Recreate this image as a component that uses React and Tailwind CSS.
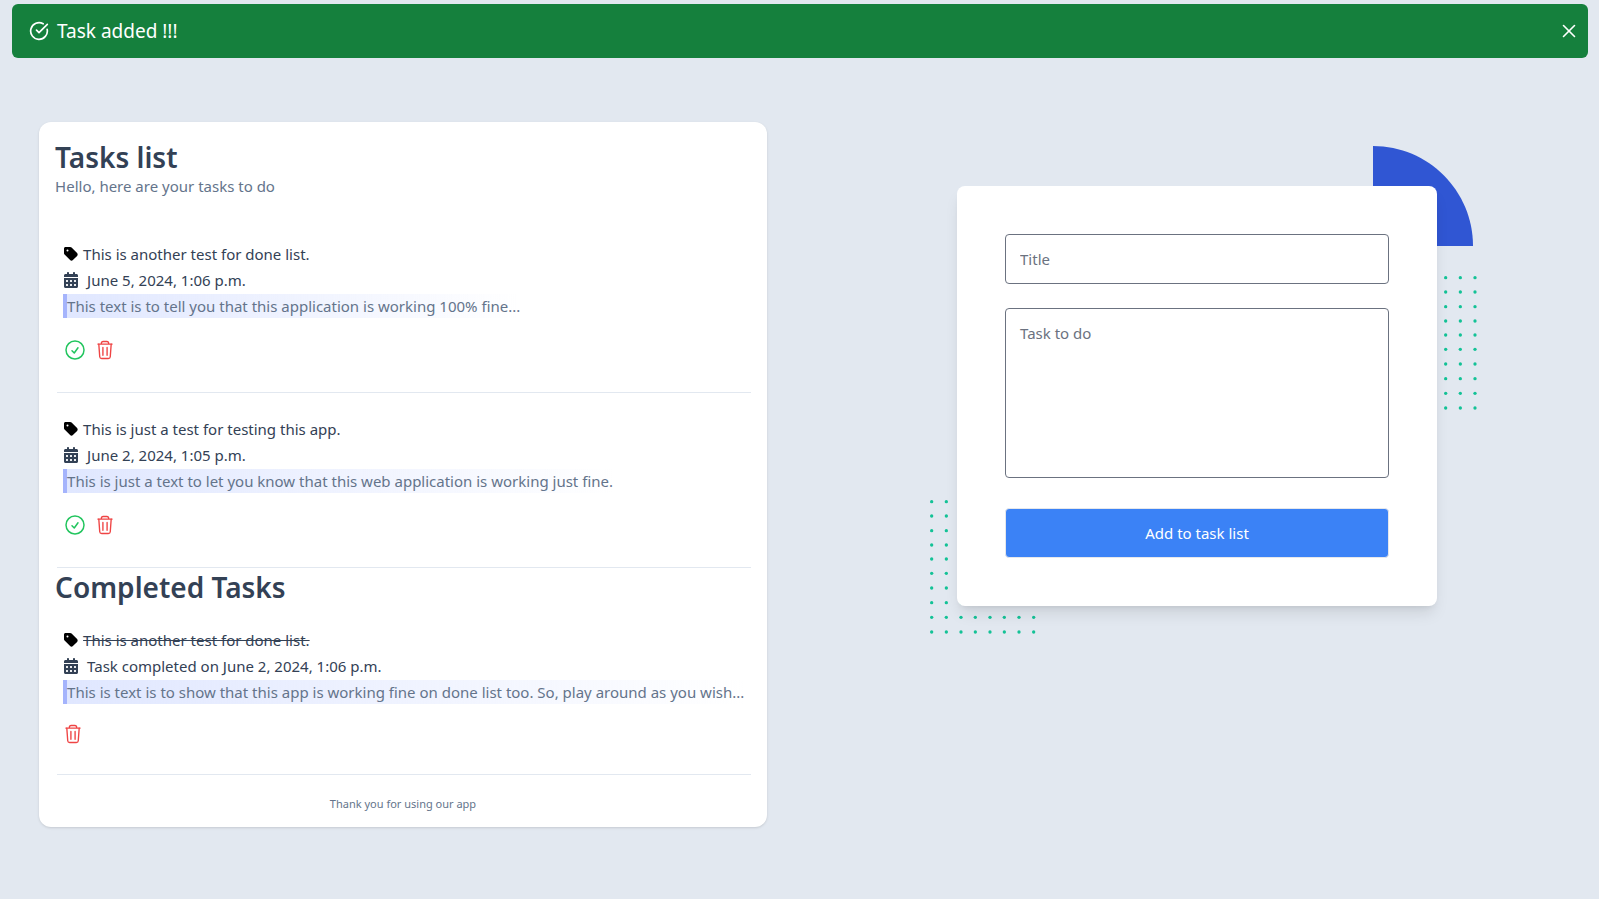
import { FaTag, FaCalendarDays } from "react-icons/fa6";
import { CircleCheckBig, X } from "lucide-react";

const openTasks = [
  {
    title: "This is another test for done list.",
    date: "June 5, 2024, 1:06 p.m.",
    text: "This text is to tell you that this application is working 100% fine...",
  },
  {
    title: "This is just a test for testing this app.",
    date: "June 2, 2024, 1:05 p.m.",
    text: "This is just a text to let you know that this web application is working just fine.",
  },
];

const doneTasks = [
  {
    title: "This is another test for done list.",
    date: "Task completed on June 2, 2024, 1:06 p.m.",
    text: "This is text is to show that this app is working fine on done list too. So, play around as you wish...",
  },
];

function CheckIcon() {
  return (
    <svg className="size-6" viewBox="0 0 24 24" fill="none" stroke="currentColor" strokeWidth="1.5" strokeLinecap="round" strokeLinejoin="round" aria-hidden="true">
      <path d="M9 12.75 11.25 15 15 9.75M21 12a9 9 0 1 1-18 0 9 9 0 0 1 18 0Z" />
    </svg>
  );
}

function TrashIcon() {
  return (
    <svg className="size-5" viewBox="1 1 22 22" fill="none" stroke="currentColor" strokeWidth="1.5" strokeLinecap="round" strokeLinejoin="round" aria-hidden="true">
      <path d="M4.2 5.5h15.600M8 5.300V4.600C8 3.500 8.900 2.600 10 2.600h4c1.100 0 2 .9 2 2v.7" />
      <path d="M5.200 5.700 6.200 19.400c.1 1.100 1 2 2.100 2h7.400c1.100 0 2-.9 2.100-2L18.800 5.700" />
      <path d="M9.700 9.200V17.800M14.300 9.200V17.800" />
    </svg>
  );
}

function Task({ task, done }) {
  return (
    <li className="ml-0.5 border-b border-[#e2e8f0] pl-1.5 pt-[23px]">
      <div className="flex h-[26px] items-center gap-1 text-[#334155]">
        <FaTag className="size-4 text-black" aria-hidden="true" />
        <h2 className={done ? "line-through" : ""}>{task.title}</h2>
      </div>
      <div className="flex h-[26px] items-center gap-2 text-[#334155]">
        <FaCalendarDays className="size-4" aria-hidden="true" />
        <p>{task.date}</p>
      </div>
      <p className="h-[27px] leading-[26px]">
        <span className="border-l-4 border-[#a5b4fc] bg-gradient-to-r from-[#e0e7ff] to-transparent py-0.5 text-[#64748b]">
          {task.text}
        </span>
      </p>
      <div className="flex items-center gap-2 pb-[30px] pt-[18px]">
        {!done && (
          <button type="button" aria-label="Mark as done" className="text-[#22c55e]">
            <CheckIcon />
          </button>
        )}
        <button type="button" aria-label="Delete task" className="text-[#ef4444]">
          <TrashIcon />
        </button>
      </div>
    </li>
  );
}

const dotRows = [1.667, 16, 30.667, 45, 59, 73.333, 88, 102.667, 117.333, 132];

function Dots({ width, columns, className }) {
  return (
    <svg width={width} height="134" viewBox={`0 0 ${width} 134`} fill="#13C296" className={className} aria-hidden="true">
      {columns.map((cx) => dotRows.map((cy) => <circle key={`${cx}-${cy}`} cx={cx} cy={cy} r="1.667" />))}
    </svg>
  );
}

export default function App() {
  return (
    <div className="min-h-screen bg-[#e2e8f0] pb-18 pl-1.5 pr-[5px] pt-1 font-['Noto_Sans',sans-serif] text-[15px] leading-6">
      <div role="alert" className="mx-1.5 flex items-center rounded-md bg-[#15803d] py-3 pl-[17px] pr-2 text-white">
        <div className="flex flex-1 items-center gap-2 text-[19px] leading-[30px]">
          <CircleCheckBig className="size-5" strokeWidth={2} aria-hidden="true" />
          <p>Task added !!!</p>
        </div>
        <button type="button" aria-label="Close">
          <X className="size-[22px]" strokeWidth={1.75} />
        </button>
      </div>

      <main className="grid grid-cols-2 items-start pt-16">
        <section className="mx-auto w-11/12 rounded-xl bg-white px-4 pb-[13px] pt-4 shadow">
          <h1 className="pb-px pt-[3px] text-[28px] font-semibold leading-8 text-[#334155]">Tasks list</h1>
          <p className="text-[#64748b]">Hello, here are your tasks to do</p>
          <ul className="pt-5">
            {openTasks.map((task) => (
              <Task key={task.title} task={task} />
            ))}
          </ul>
          <h1 className="pb-px pt-[3px] text-[28px] font-semibold leading-8 text-[#334155]">Completed Tasks</h1>
          <ul>
            {doneTasks.map((task) => (
              <Task key={task.title} task={task} done />
            ))}
          </ul>
          <p className="pt-[19px] text-center text-[11px] leading-5 text-[#64748b]">Thank you for using our app</p>
        </section>

        <section className="relative z-0 mx-auto mt-16 w-full max-w-[480px]">
          <form className="rounded-lg bg-white p-12 shadow-lg" onSubmit={(e) => e.preventDefault()}>
            <input
              type="text"
              aria-label="Title"
              placeholder="Title"
              className="mb-6 block w-full rounded border border-[#6b7280] px-[14px] py-3 placeholder:text-[#6b7280]"
            />
            <textarea
              rows={6}
              aria-label="Task to do"
              placeholder="Task to do"
              className="mb-[30px] block w-full resize-none rounded border border-[#6b7280] px-[14px] py-3 placeholder:text-[#6b7280]"
            />
            <button type="submit" className="w-full rounded border border-[#e5e7eb] bg-[#3b82f6] p-3 text-white">
              Add to task list
            </button>
          </form>
          <svg className="absolute -right-9 -top-10 -z-10" width="100" height="100" viewBox="0 0 100 100" aria-hidden="true">
            <path d="M0 0C55.2285 0 100 44.7715 100 100H0Z" fill="#3056D3" />
          </svg>
          <Dots width={34} columns={[2.667, 17.333, 32]} className="absolute -right-10 top-[90px] -z-10" />
          <Dots
            width={107}
            columns={[2.667, 17.333, 32, 46.333, 61, 75.333, 90, 104.667]}
            className="absolute -bottom-7 -left-7 -z-10"
          />
        </section>
      </main>
    </div>
  );
}
